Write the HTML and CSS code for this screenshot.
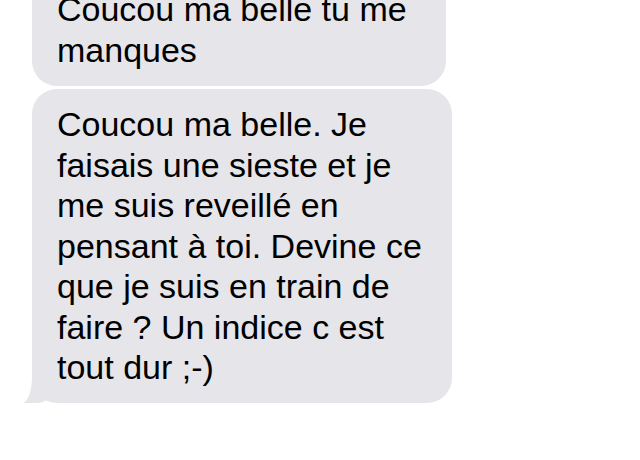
FILE: index.html
```html
<!DOCTYPE html>
<html lang="fr">

<head>
    <meta charset="UTF-8">
    <meta name="viewport" content="width=device-width, initial-scale=1.0">
    <title>Messages</title>

    <link rel="stylesheet" href="styles.css">
</head>

<body>
    <div class="thread">
        <div class="bubble bubble-first">
            Coucou ma belle tu me manques
        </div>
        <div class="bubble bubble-last">
            Coucou ma belle. Je faisais une sieste et je me suis reveillé en pensant à toi. Devine ce que je suis en train de faire ? Un indice c est tout dur ;-)
        </div>
    </div>
</body>

</html>
```

FILE: styles.css
```css
* {
    padding: 0;
    margin: 0;
    box-sizing: border-box;
}

body {
    background-color: #fff;
    font-family: "Liberation Sans", Arial, sans-serif;
    color: #000;
    overflow: hidden;
}

/* le fil est coupé en haut, comme une capture scrollée */
.thread {
    display: flex;
    flex-direction: column;
    align-items: flex-start;
    gap: 3px;
    margin-top: -26px;
    padding-left: 32px;
}

.bubble {
    position: relative;
    background-color: #e5e5ea;
    border-radius: 25px;
    padding: 15px 25px 16px;
    font-size: 34px;
    line-height: 40.5px;
}

.bubble-first {
    width: 414px;
}

.bubble-last {
    width: 420px;
    padding-bottom: 15px;
}

/* petite queue en bas à gauche */
.bubble-last::before {
    content: "";
    position: absolute;
    left: -10px;
    bottom: 0;
    width: 30px;
    height: 28px;
    background-color: #e5e5ea;
    border-bottom-right-radius: 16px 12px;
}

.bubble-last::after {
    content: "";
    position: absolute;
    left: -30px;
    bottom: 0;
    width: 30px;
    height: 28px;
    background-color: #fff;
    border-bottom-right-radius: 10px 26px;
}
```
